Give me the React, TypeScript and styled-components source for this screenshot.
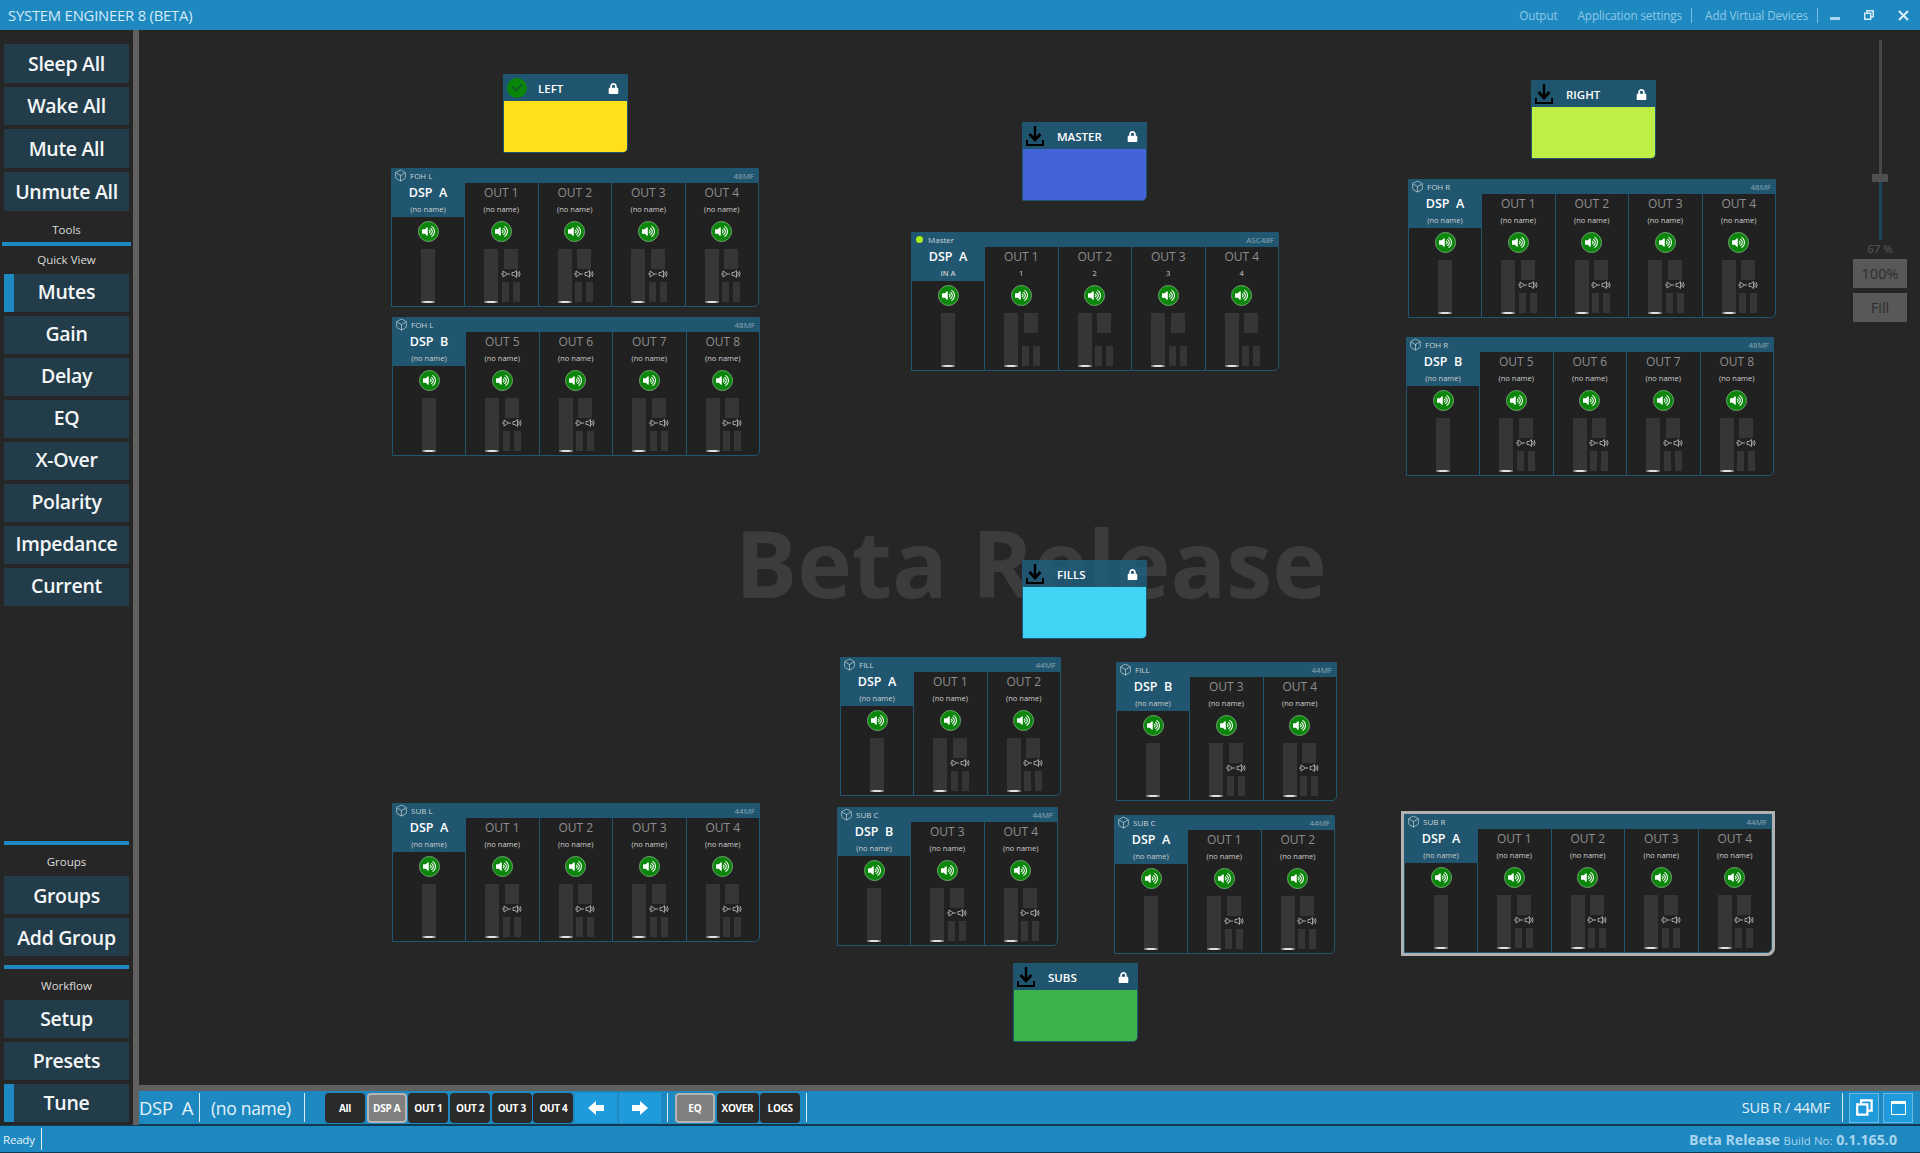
import React from 'react'
import styled, { createGlobalStyle } from 'styled-components'
import { FaLock, FaCheck, FaVolumeUp } from 'react-icons/fa'
import { Box } from 'lucide-react'

const BLUE = '#1e88c0'
const NAVY = '#20566f'
const CANVAS_X = 139
const CANVAS_Y = 30

interface CardData {
	x: number
	y: number
	title: string
	model: string
	dsp: string
	subName?: string
	outs: string[]
	selected?: boolean
	master?: boolean
}

interface GroupData {
	x: number
	y: number
	title: string
	color: string
	loaded?: boolean
}

const out14 = ['OUT 1', 'OUT 2', 'OUT 3', 'OUT 4']
const out58 = ['OUT 5', 'OUT 6', 'OUT 7', 'OUT 8']

const cards: CardData[] = [
	{ x: 391, y: 168, title: 'FOH L', model: '48MF', dsp: 'DSP  A', outs: out14 },
	{ x: 392, y: 317, title: 'FOH L', model: '48MF', dsp: 'DSP  B', outs: out58 },
	{ x: 911, y: 232, title: 'Master', model: 'ASC48F', dsp: 'DSP  A', subName: 'IN A', outs: out14, master: true },
	{ x: 1408, y: 179, title: 'FOH R', model: '48MF', dsp: 'DSP  A', outs: out14 },
	{ x: 1406, y: 337, title: 'FOH R', model: '48MF', dsp: 'DSP  B', outs: out58 },
	{ x: 840, y: 657, title: 'FILL', model: '44MF', dsp: 'DSP  A', outs: ['OUT 1', 'OUT 2'] },
	{ x: 1116, y: 662, title: 'FILL', model: '44MF', dsp: 'DSP  B', outs: ['OUT 3', 'OUT 4'] },
	{ x: 392, y: 803, title: 'SUB L', model: '44MF', dsp: 'DSP  A', outs: out14 },
	{ x: 837, y: 807, title: 'SUB C', model: '44MF', dsp: 'DSP  B', outs: ['OUT 3', 'OUT 4'] },
	{ x: 1114, y: 815, title: 'SUB C', model: '44MF', dsp: 'DSP  A', outs: ['OUT 1', 'OUT 2'] },
	{ x: 1404, y: 814, title: 'SUB R', model: '44MF', dsp: 'DSP  A', outs: out14, selected: true },
]

const groups: GroupData[] = [
	{ x: 503, y: 74, title: 'LEFT', color: '#ffe119', loaded: true },
	{ x: 1022, y: 122, title: 'MASTER', color: '#4363d8' },
	{ x: 1531, y: 80, title: 'RIGHT', color: '#bfef45' },
	{ x: 1022, y: 560, title: 'FILLS', color: '#42d4f4' },
	{ x: 1013, y: 963, title: 'SUBS', color: '#3cb44b' },
]

const DownloadIcon = () => (
	<svg width="18" height="20" viewBox="0 0 18 20" fill="none" stroke="#000" strokeWidth="2.4">
		<path d="M9 0v13" />
		<path d="M3.500 8l5.500 6 5.500-6" strokeWidth="2.800" />
		<path d="M1 14v5h16v-5" strokeWidth="2" />
	</svg>
)

const AmpIcon = () => (
	<svg width="20" height="8" viewBox="0 0 20 8" fill="none" stroke="#b0b0b0" strokeWidth="0.9">
		<path d="M0 4h2M2 1l4.500 3L2 7zM6.500 4H9" />
		<path d="M11 2.500h2l2.500-2v7l-2.500-2h-2zM16.500 2a3 3 0 0 1 0 4M18 1a5 5 0 0 1 0 6" />
	</svg>
)

const RestoreIcon = ({ size = 10, width = 1.5, color = '#d6ecf8' }) => (
	<svg width={size} height={size} viewBox="0 0 10 10" fill="none" stroke={color} strokeWidth={width}>
		<path d="M0.700 3.200h6v6h-6zM3 3V0.800h6.200v6H7" />
	</svg>
)

const BlockArrow = ({ right }: { right?: boolean }) => (
	<svg width="16" height="16" viewBox="0 0 16 16" fill="#fff">
		<path d={right ? 'M0 5h8V1l8 7-8 7v-4H0z' : 'M16 5H8V1L0 8l8 7v-4h8z'} />
	</svg>
)

const App: React.FC = () => {
	return (
		<>
			<GlobalStyle />
			<Window>
				<TitleBar>
					<AppTitle>SYSTEM ENGINEER 8 (BETA)</AppTitle>
					<TitleMenu>
						<TitleLink>Output</TitleLink>
						<TitleLink>Application settings</TitleLink>
						<TitleSep />
						<TitleLink>Add Virtual Devices</TitleLink>
						<TitleSep />
						<WinButton><MinGlyph /></WinButton>
						<WinButton><RestoreIcon size={10} /></WinButton>
						<WinButton>
							<svg width="11" height="11" viewBox="0 0 11 11" stroke="#d6ecf8" strokeWidth="2.200">
								<path d="M1 1l9 9M10 1l-9 9" />
							</svg>
						</WinButton>
					</TitleMenu>
				</TitleBar>

				<Main>
					<Sidebar>
						<SideStack>
							<SideButton $tall>Sleep All</SideButton>
							<SideButton $tall>Wake All</SideButton>
							<SideButton $tall>Mute All</SideButton>
							<SideButton $tall>Unmute All</SideButton>
						</SideStack>
						<SideLabel $first>Tools</SideLabel>
						<WideRule />
						<SideLabel>Quick View</SideLabel>
						<SideStack>
							<SideButton $active>Mutes</SideButton>
							<SideButton>Gain</SideButton>
							<SideButton>Delay</SideButton>
							<SideButton>EQ</SideButton>
							<SideButton>X-Over</SideButton>
							<SideButton>Polarity</SideButton>
							<SideButton>Impedance</SideButton>
							<SideButton>Current</SideButton>
						</SideStack>
						<LowerGroup>
							<SideRule />
							<SideLabel>Groups</SideLabel>
							<SideStack>
								<SideButton $tall>Groups</SideButton>
								<SideButton $tall>Add Group</SideButton>
							</SideStack>
							<SideRule $spaced />
							<SideLabel>Workflow</SideLabel>
							<SideStack>
								<SideButton>Setup</SideButton>
								<SideButton>Presets</SideButton>
								<SideButton $active>Tune</SideButton>
							</SideStack>
						</LowerGroup>
					</Sidebar>
					<Divider />
					<Workspace>
						<Canvas>
							<Watermark>Beta Release</Watermark>

							{groups.map((group) => (
								<GroupBox key={group.title} $x={group.x} $y={group.y}>
									<GroupHeader>
										<GroupIcon>
											{group.loaded ? (
												<CheckBadge><FaCheck size={11} color="#0b5f26" /></CheckBadge>
											) : (
												<DownloadIcon />
											)}
										</GroupIcon>
										<GroupTitle>{group.title}</GroupTitle>
										<FaLock size={11} color="#fff" />
									</GroupHeader>
									<GroupBody $color={group.color} />
								</GroupBox>
							))}

							{cards.map((card) => (
								<DeviceCard key={`${card.x}-${card.y}`} $x={card.x} $y={card.y} $selected={card.selected}>
									<CardHeader>
										{card.master ? <StatusDot /> : <Box size={13} strokeWidth={1.300} color="#c8d4da" />}
										<CardTitle>{card.title}</CardTitle>
										<CardModel>{card.model}</CardModel>
									</CardHeader>
									<Columns>
										<Column>
											<ColumnHead $dsp>
												<ColumnName $dsp>{card.dsp}</ColumnName>
												<ColumnSub $dsp={card.master}>{card.subName ?? '(no name)'}</ColumnSub>
											</ColumnHead>
											<MuteButton><FaVolumeUp size={13} color="#fff" /></MuteButton>
											<DspFaders>
												<Fader />
											</DspFaders>
										</Column>
										{card.outs.map((name, i) => (
											<Column key={name}>
												<ColumnHead>
													<ColumnName>{name}</ColumnName>
													<ColumnSub>{card.master ? i + 1 : '(no name)'}</ColumnSub>
												</ColumnHead>
												<MuteButton><FaVolumeUp size={13} color="#fff" /></MuteButton>
												<OutFaders>
													<Fader />
													<OutStack>
														<TopBlock />
														<AmpRow $hidden={card.master}><AmpIcon /></AmpRow>
														<SmallBars>
															<SmallBar />
															<SmallBar />
														</SmallBars>
													</OutStack>
												</OutFaders>
											</Column>
										))}
									</Columns>
								</DeviceCard>
							))}

							<ZoomPanel>
								<ZoomTrack>
									<ZoomThumb />
								</ZoomTrack>
								<ZoomValue>67 %</ZoomValue>
								<ZoomButton>100%</ZoomButton>
								<ZoomButton>Fill</ZoomButton>
							</ZoomPanel>
						</Canvas>
						<Splitter />
						<ToolBar>
							<DeviceName>DSP  A</DeviceName>
							<BarSep />
							<ChannelName>(no name)</ChannelName>
							<BarSep />
							<ToolGroup>
								<ToolButton>All</ToolButton>
								<ToolButton $on>DSP A</ToolButton>
								<ToolButton>OUT 1</ToolButton>
								<ToolButton>OUT 2</ToolButton>
								<ToolButton>OUT 3</ToolButton>
								<ToolButton>OUT 4</ToolButton>
								<ArrowButton><BlockArrow /></ArrowButton>
								<ArrowButton><BlockArrow right /></ArrowButton>
							</ToolGroup>
							<BarSep />
							<ToolGroup>
								<ToolButton $on>EQ</ToolButton>
								<ToolButton $wide>XOVER</ToolButton>
								<ToolButton>LOGS</ToolButton>
							</ToolGroup>
							<BarSep />
							<DeviceSummary>SUB R / 44MF</DeviceSummary>
							<BarSep />
							<ViewButton><RestoreIcon size={17} width={1.300} color="#fff" /></ViewButton>
							<ViewButton><MaxGlyph /></ViewButton>
						</ToolBar>
					</Workspace>
				</Main>

				<StatusBar>
					<StatusText>Ready</StatusText>
					<StatusSep />
					<BuildInfo>
						<strong>Beta Release</strong> <small>Build No:</small> <strong>0.1.165.0</strong>
					</BuildInfo>
				</StatusBar>
			</Window>
		</>
	)
}

const GlobalStyle = createGlobalStyle`
	html, body {
		margin: 0;
		padding: 0;
		background: #262626;
		overflow: hidden;
	}
	body {
		font-family: "Open Sans", "Noto Sans", Arial, sans-serif;
		color: #fff;
	}
	* {
		box-sizing: border-box;
	}
`

const Window = styled.div`
	width: 1920px;
	height: 1153px;
	display: flex;
	flex-direction: column;
	background: #262626;
`

const TitleBar = styled.header`
	height: 30px;
	flex: none;
	display: flex;
	align-items: center;
	justify-content: space-between;
	padding-left: 8px;
	background: ${BLUE};
`

const AppTitle = styled.div`
	font-size: 14.800px;
	color: #d4eaf6;
	letter-spacing: -0.2px;
`

const TitleMenu = styled.nav`
	display: flex;
	align-items: center;
	height: 100%;
`

const TitleSep = styled.span`
	width: 1px;
	height: 15px;
	margin-left: 9px;
	background: #7dbde0;
`

const TitleLink = styled.span`
	font-size: 11.700px;
	color: #8ec8e6;
	letter-spacing: -0.1px;
	margin-left: 20px;

	${TitleSep} + & {
		margin-left: 13px;
	}
`

const WinButton = styled.span`
	width: 34px;
	height: 30px;
	display: flex;
	align-items: center;
	justify-content: center;
`

const MinGlyph = styled.span`
	width: 10px;
	height: 3px;
	margin-top: 6px;
	background: #a9d5ec;
`

const Main = styled.div`
	flex: 1;
	min-height: 0;
	display: flex;
`

const Sidebar = styled.aside`
	width: 133px;
	flex: none;
	display: flex;
	flex-direction: column;
	padding: 14px 4px 0;
`

const SideStack = styled.div`
	display: flex;
	flex-direction: column;
	gap: 4px;
`

const SideButton = styled.div<{ $tall?: boolean; $active?: boolean }>`
	height: 38px;
	display: flex;
	align-items: center;
	justify-content: center;
	background: #223c4a;
	border-left: ${(p) => (p.$active ? `10px solid ${BLUE}` : '0')};
	padding-right: ${(p) => (p.$active ? '10px' : '0')};
	padding-bottom: ${(p) => (p.$tall ? '0' : '2px')};
	font-size: 19.500px;
	font-weight: 600;
	letter-spacing: -0.300px;
	color: #f4f6f7;

	aside > div:first-child > & {
		height: 38.670px;
	}
`

const SideLabel = styled.div<{ $first?: boolean }>`
	height: ${(p) => (p.$first ? '24px' : '25px')};
	margin-top: ${(p) => (p.$first ? '7px' : '0')};
	padding-bottom: ${(p) => (p.$first ? '0' : '4px')};
	display: flex;
	align-items: center;
	justify-content: center;
	font-size: 11.500px;
	color: #dcdcdc;
`

const WideRule = styled.div`
	height: 4px;
	margin: 0 -2px 3px;
	background: ${BLUE};
`

const SideRule = styled.div<{ $spaced?: boolean }>`
	height: 4px;
	margin-top: ${(p) => (p.$spaced ? '9px' : '0')};
	margin-bottom: 6px;
	background: ${BLUE};
`

const LowerGroup = styled.div`
	margin-top: auto;
	padding-bottom: 3px;
`

const Divider = styled.div`
	width: 6px;
	flex: none;
	background: #606060;
`

const Workspace = styled.div`
	flex: 1;
	min-width: 0;
	display: flex;
	flex-direction: column;
`

const Canvas = styled.main`
	position: relative;
	flex: 1;
	overflow: hidden;
	background: #262626;
`

const Watermark = styled.div`
	position: absolute;
	left: ${735 - CANVAS_X}px;
	top: ${497 - CANVAS_Y}px;
	font-size: 92.500px;
	line-height: 130px;
	font-weight: 700;
	white-space: nowrap;
	color: #3c3c3c;
`

const GroupBox = styled.section<{ $x: number; $y: number }>`
	position: absolute;
	left: ${(p) => p.$x - CANVAS_X}px;
	top: ${(p) => p.$y - CANVAS_Y}px;
	width: 125px;
	height: 79px;
	display: flex;
	flex-direction: column;
	border: 1px solid ${NAVY};
	border-bottom-right-radius: 5px;
	overflow: hidden;
`

const GroupHeader = styled.div`
	height: 26px;
	flex: none;
	display: flex;
	align-items: center;
	padding-right: 8px;
	background: rgba(31, 94, 124, 0.85);
`

const GroupIcon = styled.div`
	width: 34px;
	flex: none;
	display: flex;
	justify-content: flex-start;
	padding: 0 0 1px 3px;
`

const CheckBadge = styled.span`
	width: 20px;
	height: 20px;
	display: flex;
	align-items: center;
	justify-content: center;
	border-radius: 50%;
	background: #0a860a;
`

const GroupTitle = styled.span`
	flex: 1;
	font-size: 11.500px;
	font-weight: 600;
	color: #fff;
`

const GroupBody = styled.div<{ $color: string }>`
	flex: 1;
	background: ${(p) => p.$color};
`

const DeviceCard = styled.section<{ $x: number; $y: number; $selected?: boolean }>`
	position: absolute;
	left: ${(p) => p.$x - CANVAS_X}px;
	top: ${(p) => p.$y - CANVAS_Y}px;
	display: flex;
	flex-direction: column;
	height: 139px;
	background: #212121;
	border: 1px solid ${NAVY};
	border-bottom-right-radius: 5px;
	box-shadow: ${(p) => (p.$selected ? '0 0 0 3px #b0b0b0' : 'none')};
	overflow: ${(p) => (p.$selected ? 'visible' : 'hidden')};
`

const CardHeader = styled.div`
	height: 14px;
	flex: none;
	display: flex;
	align-items: center;
	gap: 3px;
	padding: 0 4px 1px 2px;
	background: ${NAVY};
`

const StatusDot = styled.span`
	width: 7px;
	height: 7px;
	margin: 0 2px;
	border-radius: 50%;
	background: #a6f01e;
`

const CardTitle = styled.span`
	flex: 1;
	font-size: 8px;
	color: #c8d3d9;
`

const CardModel = styled.span`
	font-size: 8px;
	color: #8fa8b5;
`

const Columns = styled.div`
	flex: 1;
	display: flex;
`

const Column = styled.div`
	width: 73.500px;
	display: flex;
	flex-direction: column;
	align-items: center;
	border-left: 1px solid ${NAVY};

	&:first-child {
		width: 72px;
		border-left: 0;
	}
`

const ColumnHead = styled.div<{ $dsp?: boolean }>`
	width: 100%;
	height: 34px;
	flex: none;
	display: flex;
	flex-direction: column;
	align-items: center;
	background: ${(p) => (p.$dsp ? NAVY : 'transparent')};
`

const ColumnName = styled.div<{ $dsp?: boolean }>`
	margin-top: 2px;
	font-size: ${(p) => (p.$dsp ? '12.500px' : '12px')};
	line-height: 16px;
	font-weight: ${(p) => (p.$dsp ? 600 : 400)};
	color: ${(p) => (p.$dsp ? '#fff' : '#8e8e8e')};
	white-space: pre;
`

const ColumnSub = styled.div<{ $dsp?: boolean }>`
	margin-top: 2px;
	font-size: 7.500px;
	line-height: 12px;
	color: #cdcdcd;
	font-weight: ${(p) => (p.$dsp ? 600 : 400)};
`

const MuteButton = styled.div`
	width: 21px;
	height: 21px;
	flex: none;
	margin-top: 4px;
	display: flex;
	align-items: center;
	justify-content: center;
	border-radius: 50%;
	background: #0a860a;
	border: 1px solid #6fa56f;
`

const DspFaders = styled.div`
	margin-top: 7px;
	display: flex;
	justify-content: center;
`

const OutFaders = styled.div`
	align-self: flex-start;
	margin: 7px 0 0 19px;
	display: flex;
	gap: 3px;
`

const Fader = styled.div`
	position: relative;
	width: 14px;
	height: 54px;
	background: #363636;

	&::after {
		content: '';
		position: absolute;
		left: 0;
		right: 0;
		bottom: 0;
		height: 2px;
		background: linear-gradient(90deg, #555, #e0e0e0 30%, #e0e0e0 70%, #555);
	}
`

const OutStack = styled.div`
	width: 19px;
	display: flex;
	flex-direction: column;
	align-items: center;
`

const TopBlock = styled.div`
	width: 14px;
	height: 20px;
	background: #363636;
`

const AmpRow = styled.div<{ $hidden?: boolean }>`
	height: 13px;
	padding-bottom: 3px;
	display: flex;
	align-items: center;
	visibility: ${(p) => (p.$hidden ? 'hidden' : 'visible')};
`

const SmallBars = styled.div`
	display: flex;
	gap: 4px;
`

const SmallBar = styled.div`
	width: 7px;
	height: 20px;
	background: #363636;
`

const ZoomPanel = styled.div`
	position: absolute;
	right: 13px;
	top: 10px;
	width: 54px;
	display: flex;
	flex-direction: column;
	align-items: center;
`

const ZoomTrack = styled.div`
	position: relative;
	width: 3px;
	height: 200px;
	background: linear-gradient(#484848 0 67%, #1c465c 67% 100%);
`

const ZoomThumb = styled.div`
	position: absolute;
	left: -6.500px;
	top: 134px;
	width: 16px;
	height: 8px;
	border-radius: 1px;
	background: #505050;
`

const ZoomValue = styled.div`
	font-size: 11.500px;
	line-height: 18px;
	margin-bottom: 1px;
	color: #5a5a5a;
`

const ZoomButton = styled.div`
	width: 54px;
	height: 29px;
	margin-bottom: 5px;
	display: flex;
	align-items: center;
	justify-content: center;
	background: #585858;
	font-size: 14.500px;
	color: #2e2e2e;
`

const Splitter = styled.div`
	height: 6px;
	flex: none;
	background: #606060;
`

const ToolBar = styled.div`
	height: 34px;
	flex: none;
	display: flex;
	align-items: center;
	padding-right: 7px;
	background: ${BLUE};
	border-bottom: 1px solid #0f3a52;
`

const DeviceName = styled.div`
	width: 60px;
	font-size: 18.500px;
	letter-spacing: -0.300px;
	color: #e4f2fa;
	white-space: pre;
`

const ChannelName = styled.div`
	width: 104px;
	padding-left: 11px;
	font-size: 17.500px;
	color: #e4f2fa;
	letter-spacing: -0.300px;
	white-space: nowrap;
`

const BarSep = styled.span`
	width: 1px;
	height: 29px;
	flex: none;
	background: #d8ecf7;
`

const ToolGroup = styled.div`
	display: flex;
	gap: 1.700px;
	margin: 0 6px 0 20px;

	& + span + & {
		margin-left: 7px;
	}
`

const ToolButton = styled.div<{ $on?: boolean; $wide?: boolean }>`
	width: ${(p) => (p.$wide ? '42px' : '40px')};
	height: 30px;
	display: flex;
	align-items: center;
	justify-content: center;
	border-radius: 4px;
	background: ${(p) => (p.$on ? '#808080' : '#2a2a2a')};
	border: ${(p) => (p.$on ? '2px solid #b4b4b4' : '0')};
	font-size: 10px;
	font-weight: 700;
	letter-spacing: -0.300px;
	color: #fff;
`

const ArrowButton = styled.div`
	width: 42px;
	height: 30px;
	display: flex;
	align-items: center;
	justify-content: center;
	background: #1f9bdc;
`

const DeviceSummary = styled.div`
	margin-left: auto;
	margin-right: 12px;
	font-size: 14.500px;
	color: #e4f2fa;
	letter-spacing: -0.200px;
`

const ViewButton = styled.div`
	width: 30px;
	height: 30px;
	flex: none;
	margin-left: 4px;
	display: flex;
	align-items: center;
	justify-content: center;
	background: #1f9bdc;
	border: 1px solid #6cb9e4;

	&:nth-last-child(2) {
		margin-left: 6px;
	}
`

const MaxGlyph = styled.span`
	width: 15px;
	height: 14px;
	border: 1.500px solid #fff;
	border-top-width: 3px;
`

const StatusBar = styled.footer`
	height: 28px;
	flex: none;
	display: flex;
	align-items: center;
	background: ${BLUE};
	border-top: 1px solid #0f3a52;
	border-bottom: 1px solid #0f3a52;
	padding-left: 3px;
`

const StatusText = styled.span`
	font-size: 11.500px;
	letter-spacing: -0.200px;
	color: #e4f2fa;
`

const StatusSep = styled.span`
	width: 1px;
	height: 22px;
	margin-left: 6px;
	background: #e4f2fa;
`

const BuildInfo = styled.div`
	margin-left: auto;
	padding-right: 23px;
	font-size: 14.200px;
	color: #a8d6ee;

	strong {
		font-weight: 700;
	}

	small {
		font-size: 11.500px;
	}
`

export default App
